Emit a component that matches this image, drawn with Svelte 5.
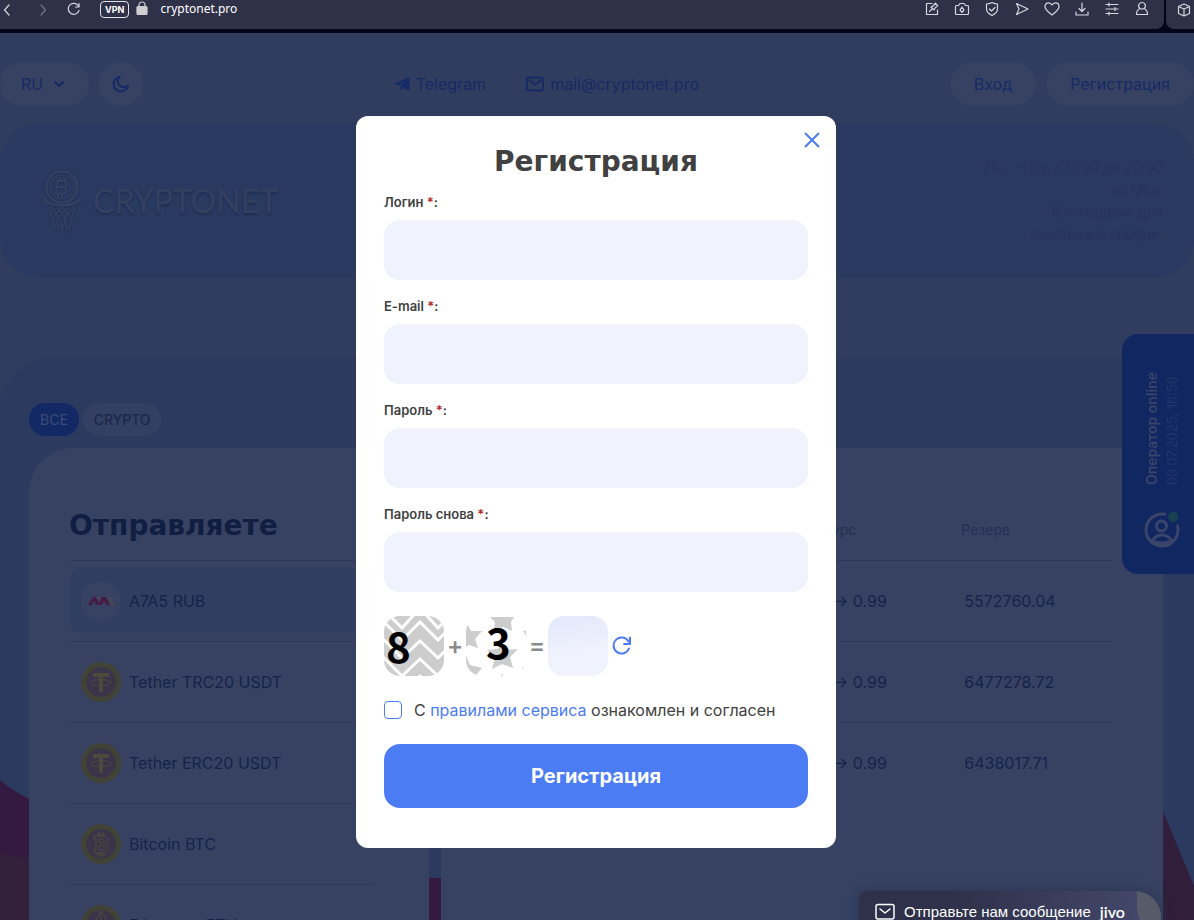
<script>
	const fields = [
		{ id: 'login', label: 'Логин', type: 'text' },
		{ id: 'email', label: 'E-mail', type: 'email' },
		{ id: 'password', label: 'Пароль', type: 'password' },
		{ id: 'password2', label: 'Пароль снова', type: 'password' }
	];

	const currencies = [
		{ name: 'A7A5 RUB', icon: 'a7a5' },
		{ name: 'Tether TRC20 USDT', icon: 'usdt' },
		{ name: 'Tether ERC20 USDT', icon: 'usdt' },
		{ name: 'Bitcoin BTC', icon: 'btc' },
		{ name: 'Ethereum ETH', icon: 'eth' }
	];

	const rates = [
		{ rate: '0.99', reserve: '5572760.04' },
		{ rate: '0.99', reserve: '6477278.72' },
		{ rate: '0.99', reserve: '6438017.71' }
	];

	const schedule = ['Пн. — Пт. с 11:00 до 20:00', 'по Мск.', 'В выходные дни', 'свободный график.'];

	// 16x16 outline icons of the browser toolbar
	const tools = [
		{ name: 'Edit', d: 'M8 2.5H2.5v11h11V9M13.5 12v1.5M5.5 10.5l2.5-2.5M7 6l3 3 1-2 2.8-2.4-2.4-2.4L9 5z' },
		{ name: 'Snapshot', d: 'M1.500 5.500q0-1 1-1H4.500l1.500-2h4l1.500 2h2q1 0 1 1v7q0 1-1 1h-11q-1 0-1-1zM8 6.200l2 2.800-2 2.400-2-2.400z' },
		{ name: 'Shield', d: 'M8 1.500c2 1 4 1.500 5.500 1.500v5c0 3-2.500 5-5.500 6.500C5 13 2.500 11 2.500 8V3C4 3 6 2.500 8 1.500zM5.500 8l2 2 3.500-3.500' },
		{ name: 'Flow', d: 'M2.500 2.500l11.500 5.500-11.500 5.500 2.500-5.500z' },
		{ name: 'Pinboard', d: 'M8 14C4 11 1 8.500 1 5.500 1 3 2.800 1.800 4.500 1.800 6 1.800 7.200 2.600 8 4c.8-1.400 2-2.200 3.500-2.200C13.200 1.800 15 3 15 5.500c0 3-3 5.500-7 8.500z' },
		{ name: 'Downloads', d: 'M8 2v8.500M5 7.500l3 3 3-3M2 11v3h12v-3' },
		{ name: 'Easy setup', d: 'M2 3.500h12M2 8h12M2 12.500h12M5 2v3M11 6.500v3M5 11v3' },
		{ name: 'Profile', d: 'M8 1.500a3.300 3.300 0 0 1 2 6c2.500 1 3.500 3 3.500 6h-11c0-3 1-5 3.500-6a3.300 3.300 0 0 1 2-6zM6 7.500q2 1 4 0' }
	];

	let lang = $state('RU');
	let agreed = $state(false);
	let open = $state(true);
</script>

<div class="screen">
	<div class="browser">
		<div class="toolbar">
			<div class="history">
				<button class="tool" aria-label="Back"><svg viewBox="0 0 16 16"><path d="M9 4L4.500 9 9 14" /></svg></button>
				<button class="tool dim" aria-label="Forward"><svg viewBox="0 0 16 16"><path d="M8 4l4.500 5L8 14" /></svg></button>
				<button class="tool" aria-label="Reload">
					<svg viewBox="0 0 16 16"><path d="M12.500 5A5.500 5.500 0 1 0 13 9.500M13 2.500v3.500H9.500" /></svg>
				</button>
			</div>
			<span class="vpn">VPN</span>
			<svg class="lock" viewBox="0 0 12 14"><path d="M3 6V4a3 3 0 0 1 6 0v2" /><rect x="1" y="5.500" width="10" height="8" rx="1" /></svg>
			<span class="url">cryptonet.pro</span>
			<div class="tools">
				{#each tools as tool}
					<button class="tool" aria-label={tool.name}><svg viewBox="0 0 16 16"><path d={tool.d} /></svg></button>
				{/each}
			</div>
		</div>
		<div class="side">
			<button class="tool" aria-label="Extensions">
				<svg viewBox="0 0 16 16"><path d="M8 2l5.500 2.500v7L8 14l-5.500-2.500v-7zM2.500 4.500L8 7l5.500-2.500M8 7v7" /></svg>
			</button>
		</div>
	</div>

	<div class="site">
		<header>
			<div class="group">
				<label class="pill lang">
					<select bind:value={lang} aria-label="Язык">
						<option>RU</option>
						<option>EN</option>
					</select>
					<svg viewBox="0 0 12 8"><path d="M2 2l4 4 4-4" /></svg>
				</label>
				<button class="pill theme" aria-label="Тема">
					<svg viewBox="0 0 20 20"><path d="M8.500 3A7.300 7.300 0 1 0 17 11.500 5.500 5.500 0 0 1 8.500 3z" /></svg>
				</button>
			</div>
			<div class="contacts">
				<a href="#telegram">
					<svg class="plane" viewBox="0 0 16 14"><path d="M0 6.800L15.500 0v14L9.500 11l-2.500 2-.5-4L13 3.500 5 8.500z" /></svg>
					Telegram
				</a>
				<a href="#mail">
					<svg class="mail" viewBox="0 0 18 16"><rect x="1" y="1.500" width="16" height="13" rx="1.500" /><path d="M3.500 4.500l5.500 4 5.500-4" /></svg>
					mail@cryptonet.pro
				</a>
			</div>
			<div class="group">
				<a class="pill" href="#login">Вход</a>
				<a class="pill" href="#register">Регистрация</a>
			</div>
		</header>

		<div class="banner">
			<a class="logo" href="#home">
				<svg viewBox="0 0 38 62">
					<circle cx="19" cy="17" r="15.500" stroke-width="2.500" />
					<circle cx="19" cy="17" r="12" stroke-width="1.200" />
					<path d="M27 5a15 15 0 0 1 2 23M1 28c2 9 34 9 36 0M2 31c6 6 28 6 34 0" stroke-width="2" />
					<path d="M15 11l-2 13M14 11h6c5 0 5 6 0 6h-5 5c5 1 4 7-1 7h-7M17 8v3M21 8v3M15 24v3M19 24v3" stroke-width="2" />
					<path d="M6 37l6 22M32 37l-6 22M8 37l9 12 3 11M14 38l10 11-6 11M24 38L13 50l3 10M30 37l-9 12 3 11M19 37l-8 9M19 37l8 9" stroke-width="1.500" />
				</svg>
				<span>CRYPTONET</span>
			</a>
			<p>
				{#each schedule as line}
					<span>{line}</span>
				{/each}
			</p>
		</div>

		<main>
			<svg class="waves" viewBox="0 0 1194 140" preserveAspectRatio="xMidYMax slice">
				<path fill="#341a40" d="M0 0C14 12 22 15 40 24L240 98h300v42H0z" />
				<path fill="#33203a" d="M0 74Q20 78 40 80v60H0z" />
				<path fill="#301e3a" d="M1150 0l44 106v34h-60V0z" />
			</svg>
			<div class="tabs">
				<button class="tab active">ВСЕ</button>
				<button class="tab">CRYPTO</button>
			</div>
			<div class="panels">
				<section class="panel give">
					<h2>Отправляете</h2>
					<ul>
						{#each currencies as currency, i}
							<li>
								<button class="currency" class:selected={i === 0}>
									<svg viewBox="0 0 40 40">
										{#if currency.icon === 'a7a5'}
											<circle cx="20" cy="20" r="20" fill="#374263" />
											<path fill="#451c45" d="M7 24l5-8h3l4 8h-4l-2-4-2 4zM17 24l4-8h4l4 8h-4l-2-4-2 4z" />
											<path fill="#4a4855" d="M15 16h5l-2 4zM26 16h6v2h-3l4 3v3h-3l-2-5z" />
										{:else}
											<circle cx="20" cy="20" r="20" fill="#414336" />
											<circle cx="20" cy="20" r="15" fill="#3b3349" />
											<circle cx="20" cy="20" r="15" fill="none" stroke="#3c3c3b" />
											{#if currency.icon === 'usdt'}
												<path fill="#4a4b3d" d="M12 11h16v4h-6v15h-4V15h-6z" />
												<ellipse cx="20" cy="20.500" rx="10" ry="3" fill="none" stroke="#4a4b3d" />
											{:else if currency.icon === 'btc'}
												<path class="line" d="M13 12h9c6 0 6 7 2 8 5 1 4 9-2 9h-9v-3h2V15h-2zM18 15v4h3c3 0 3-4 0-4zM18 22v4h4c3 0 3-4 0-4zM17 12V9h2v3M21 12V9h2v3M17 29v3h2v-3M21 29v3h2v-3" />
											{:else}
												<path class="line" d="M20 6l-8 14 8 5 8-5zM20 6v19M12 23l8 10 8-10" />
											{/if}
										{/if}
									</svg>
									{currency.name}
								</button>
							</li>
						{/each}
					</ul>
				</section>
				<section class="panel get">
					<table>
						<thead>
							<tr><th class="rate">Курс</th><th>Резерв</th></tr>
						</thead>
						<tbody>
							{#each rates as row}
								<tr><td class="rate">→ {row.rate}</td><td class="reserve">{row.reserve}</td></tr>
							{/each}
						</tbody>
					</table>
				</section>
			</div>
		</main>
	</div>

	<aside class="operator">
		<div class="status">
			<b>Оператор online</b>
			<span>09.07.2025, 16:56</span>
		</div>
		<svg viewBox="0 0 36 36">
			<path d="M21 2.300A16 16 0 1 0 33.500 14M8 29c5-8 15-8 20 0M8 29q10 4 20 0" />
			<circle cx="17.500" cy="14" r="5" />
			<circle class="dot" cx="29" cy="5" r="5" />
		</svg>
	</aside>

	<button class="jivo">
		<svg viewBox="0 0 20 18"><rect x="1" y="1.500" width="18" height="14.500" rx="2" /><path d="M5 6l5 4 5-4" /></svg>
		Отправьте нам сообщение
		<span>jivo</span>
		<i></i>
	</button>

	{#if open}
		<div class="overlay">
			<form class="modal" onsubmit={(e) => e.preventDefault()}>
				<button type="button" class="close" aria-label="Закрыть" onclick={() => (open = false)}>
					<svg viewBox="0 0 16 16"><path d="M1.500 1.500l13 13M14.500 1.500l-13 13" /></svg>
				</button>
				<h1>Регистрация</h1>
				{#each fields as field}
					<div class="field">
						<label for={field.id}>{field.label} <em>*</em>:</label>
						<input id={field.id} type={field.type} />
					</div>
				{/each}
				<div class="captcha">
					<svg class="image" viewBox="0 0 60 60">
						<clipPath id="tile"><rect width="60" height="60" rx="16" /></clipPath>
						<g clip-path="url(#tile)">
							<rect width="60" height="60" fill="#cdcdcd" />
							<path class="zigzag" d="M-4 -10L18 12 36 -8 54 12 66 0M-4 2L18 24 36 6 54 24 66 12M-4 20L18 42 36 25 54 42 66 30M-4 38L18 60 36 43 54 60 66 48M18 78L36 60 54 78" />
						</g>
						<text x="2" y="47">8</text>
					</svg>
					<span>+</span>
					<svg class="image" viewBox="0 0 60 60">
						<g clip-path="url(#tile)">
							<path
								fill="#cdcdcd"
								d="M24 1h24l-3 5 1 9-9-4-9 4 1-9zM-4 8l5 0 4 7 11 0-7 8 3 9-9-3-7 4zM36 27l4 7 12-1-8 8 3 11-11-4-10 5 3-11-8-8 11-1zM0 40l4 9 12 3-7 8H0zM57 14l3 1v5zM56 52l2-1-1 2zM36 57l1 3h-2z"
							/>
						</g>
						<text x="20" y="43">3</text>
					</svg>
					<span>=</span>
					<input type="text" aria-label="Ответ" />
					<button type="button" class="refresh" aria-label="Обновить">
						<svg viewBox="0 0 20 20"><path d="M16.500 5.500A8 8 0 1 0 17 12.500M18 1.500V8h-6" /></svg>
					</button>
				</div>
				<div class="agree">
					<input id="agree" type="checkbox" bind:checked={agreed} />
					<label for="agree">С <a href="#rules">правилами сервиса</a> ознакомлен и согласен</label>
				</div>
				<button class="submit">Регистрация</button>
			</form>
		</div>
	{/if}
</div>

<style>
	:global(body) {
		margin: 0;
	}

	.screen {
		position: relative;
		height: 100vh;
		overflow: hidden;
		background: #303d5f;
		font: 16px/20px Inter, 'Noto Sans', sans-serif;
		color: #15224a;
	}

	.screen *,
	.screen *::before {
		box-sizing: border-box;
	}

	button,
	input,
	select {
		font: inherit;
		color: inherit;
		border: none;
		background: none;
		padding: 0;
		margin: 0;
	}

	button {
		cursor: pointer;
	}

	a {
		color: inherit;
		text-decoration: none;
	}

	svg {
		flex: none;
		fill: none;
		stroke-linecap: round;
		stroke-linejoin: round;
	}

	h1,
	h2 {
		margin: 0;
		font: bold 28px/28px 'DejaVu Sans', sans-serif;
	}

	/* browser chrome */
	.browser {
		display: flex;
		gap: 2px;
		height: 33px;
		padding-bottom: 4px;
		background: #03051a;
	}

	.toolbar {
		flex: 1;
		display: flex;
		align-items: flex-start;
		padding-right: 14px;
		background: #2f3148;
		border-radius: 0 0 8px 0;
	}

	.history {
		display: flex;
		gap: 17px;
	}

	.tool {
		width: 16px;
		height: 18px;
	}

	.tool svg {
		display: block;
		width: 16px;
		height: 16px;
		stroke: #d6d7de;
		stroke-width: 1.2;
	}

	.dim {
		opacity: 0.4;
	}

	.vpn {
		margin: 1px 7px 0 18px;
		padding: 0 4px;
		border: 1px solid #e4e4e8;
		border-radius: 4px;
		color: #fff;
		font-size: 9px;
		line-height: 15px;
		font-weight: 700;
	}

	.lock {
		width: 12px;
		height: 14px;
		margin: 1px 12px 0 0;
		stroke: #cfcfd2;
		stroke-width: 1.2;
	}

	.lock rect {
		fill: #cfcfd2;
	}

	.url {
		color: #fff;
		font-family: 'Noto Sans', sans-serif;
		font-size: 12px;
		line-height: 18px;
	}

	.tools {
		display: flex;
		gap: 14px;
		margin-left: auto;
	}

	.side {
		width: 28px;
		padding: 1px 0 0 10px;
		background: #2f3148;
		border-radius: 0 0 0 8px;
	}

	/* page */
	header {
		display: flex;
		justify-content: space-between;
		align-items: center;
		padding: 29px 0 17px;
		color: #152a66;
	}

	.group,
	.contacts {
		display: flex;
		gap: 10px;
	}

	.contacts {
		gap: 40px;
	}

	.contacts a {
		display: flex;
		align-items: center;
		gap: 6px;
	}

	.pill {
		display: flex;
		align-items: center;
		height: 44px;
		padding: 0 24px;
		border-radius: 22px;
		background: #374263;
	}

	.lang {
		gap: 9px;
		padding-left: 21px;
	}

	.lang select {
		appearance: none;
	}

	.lang svg {
		width: 12px;
		height: 8px;
		stroke: #152a66;
		stroke-width: 2;
	}

	.theme {
		width: 44px;
		padding: 0 12px;
	}

	.theme svg {
		width: 20px;
		height: 20px;
		stroke: #152a66;
		stroke-width: 2;
	}

	.plane {
		width: 16px;
		height: 14px;
		fill: #152a66;
	}

	.mail {
		width: 18px;
		height: 16px;
		stroke: #152a66;
		stroke-width: 2;
	}

	.banner {
		display: flex;
		justify-content: space-between;
		align-items: center;
		min-height: 155px;
		padding: 0 31px 0 43px;
		border-radius: 40px;
		background: #2a3960;
	}

	.logo {
		display: flex;
		align-items: center;
		gap: 12px;
		color: #34405f;
		font: 32px/40px Lato, sans-serif;
		text-shadow: 0 2px 2px #1f2e55;
	}

	.logo svg {
		width: 38px;
		height: 62px;
		stroke: #34405f;
		filter: drop-shadow(0 1px 1px #1f2e55);
	}

	.banner p {
		margin: 0;
		text-align: right;
		font-size: 14px;
		line-height: 22px;
		color: #26335f;
	}

	.banner p span {
		display: block;
	}

	main {
		position: relative;
		height: 600px;
		margin-top: 80px;
		padding: 45px 31px 0 29px;
		border-radius: 50px 50px 0 0;
		background: #2d3a5f;
	}

	.waves {
		position: absolute;
		left: 0;
		top: 422px;
		width: 100%;
		height: 140px;
	}

	.tabs {
		position: relative;
		display: flex;
		gap: 4px;
		margin-bottom: 12px;
	}

	.tab {
		height: 33px;
		padding: 0 11px;
		border-radius: 16px;
		background: #334061;
		color: #17234a;
		font-size: 14px;
	}

	.tab.active {
		background: #132966;
		color: #3e4b74;
	}

	.panels {
		position: relative;
		display: grid;
		grid-template-columns: 400fr 722fr;
		gap: 12px;
	}

	.panel {
		height: 600px;
		background: #374263;
	}

	.give {
		padding: 64px 56px 0 40px;
		border-top-left-radius: 44px;
	}

	.get {
		padding: 52px 50px 0 40px;
	}

	h2 {
		margin-bottom: 20px;
		color: #101e42;
	}

	ul {
		list-style: none;
		margin: 0;
		padding: 0;
	}

	li {
		padding: 8px 0;
		border-top: 1px solid #2b3859;
	}

	.currency {
		display: flex;
		align-items: center;
		gap: 8px;
		width: 100%;
		height: 64px;
		padding: 0 12px;
		border-radius: 14px;
	}

	.selected {
		background: #303e62;
	}

	.currency svg {
		width: 40px;
		height: 40px;
	}

	.line {
		stroke: #4d4e3e;
	}

	table {
		width: 100%;
		border-collapse: collapse;
		table-layout: fixed;
	}

	th,
	td {
		padding: 0;
		text-align: left;
	}

	th {
		height: 60px;
		color: #222f52;
		font-size: 14px;
		font-weight: 400;
	}

	td {
		height: 81px;
	}

	.rate {
		width: 76%;
	}

	th.rate {
		padding-left: 342px;
	}

	td.rate {
		padding-left: 352px;
	}

	.reserve {
		padding-left: 3px;
	}

	tbody tr {
		border-top: 1px solid #2b3859;
	}

	.operator {
		position: absolute;
		right: 0;
		top: 334px;
		display: flex;
		flex-direction: column;
		align-items: center;
		justify-content: flex-end;
		gap: 14px;
		width: 72px;
		height: 240px;
		padding: 0 0 26px 8px;
		border-radius: 16px 0 0 16px;
		background: #112762;
		color: #3a4569;
		font-size: 14px;
	}

	.status {
		writing-mode: vertical-rl;
		transform: rotate(180deg);
		padding-top: 12px;
		border-top: 1px solid #18295b;
		white-space: nowrap;
	}

	/* each line is a vertical column, read bottom to top */
	.status b,
	.status span {
		display: block;
	}

	.status b {
		font-weight: 600;
	}

	.status span {
		color: #24376b;
		font-size: 13px;
	}

	.operator svg {
		width: 36px;
		height: 36px;
		stroke: #3a4569;
		stroke-width: 3;
	}

	.operator .dot {
		fill: #174350;
		stroke: none;
	}

	.jivo {
		position: absolute;
		right: 33px;
		bottom: -12px;
		display: flex;
		align-items: center;
		height: 41px;
		padding: 0 36px 0 16px;
		gap: 9px;
		overflow: hidden;
		border-radius: 8px 26px 0 0;
		background: linear-gradient(100deg, #2f3049 30%, #454a6e);
		box-shadow: 0 0 12px #2a3450;
		color: #fff;
		font: 15px/20px 'Liberation Sans', sans-serif;
	}

	.jivo svg {
		width: 20px;
		height: 18px;
		stroke: #fff;
		stroke-width: 1.5;
	}

	.jivo span {
		font: 600 16px/20px Lato, sans-serif;
	}

	.jivo i {
		position: absolute;
		right: 0;
		top: 0;
		width: 24px;
		height: 41px;
		border-radius: 0 24px 0 24px;
		background: #575a68;
	}

	/* dialog */
	.overlay {
		position: absolute;
		inset: 0;
		display: flex;
		justify-content: center;
		align-items: flex-start;
		padding: 116px 2px 0 0;
	}

	.modal {
		position: relative;
		width: 480px;
		padding: 32px 28px 40px;
		border-radius: 12px;
		background: #fff;
		color: #414141;
	}

	.close {
		position: absolute;
		top: 16px;
		right: 16px;
		width: 16px;
		height: 16px;
	}

	.close svg {
		display: block;
		stroke: #4c7cf3;
		stroke-width: 2;
	}

	h1 {
		margin-bottom: 16px;
		text-align: center;
	}

	.field {
		display: flex;
		flex-direction: column;
		gap: 8px;
		margin-bottom: 16px;
		font-size: 13px;
		font-weight: 600;
	}

	em {
		color: #b3261e;
		font-style: normal;
	}

	.field input {
		height: 60px;
		padding: 0 20px;
		border-radius: 16px;
		background: #f0f3fd;
	}

	.captcha {
		display: flex;
		align-items: center;
		margin: 24px 0;
	}

	.image {
		width: 60px;
		height: 60px;
		overflow: visible;
	}

	.image text {
		fill: #000;
		font: 700 42px 'Noto Sans CJK SC', sans-serif;
	}

	.zigzag {
		stroke: #fff;
		stroke-width: 3;
		stroke-linejoin: miter;
	}

	.captcha span {
		width: 22px;
		text-align: center;
		color: #8a8a8a;
		font-size: 24px;
		font-weight: 600;
	}

	.captcha input {
		width: 60px;
		height: 60px;
		border-radius: 16px;
		background: linear-gradient(170deg, #e2e7fb, #f0f3fd 60%);
		text-align: center;
	}

	.refresh {
		width: 20px;
		height: 20px;
		margin-left: 4px;
	}

	.refresh svg {
		display: block;
		stroke: #4c7cf3;
		stroke-width: 2;
	}

	.agree {
		display: flex;
		align-items: center;
		gap: 12px;
		margin-bottom: 24px;
	}

	.agree input {
		appearance: none;
		width: 18px;
		height: 18px;
		border: 1px solid #4c7cf3;
		border-radius: 4px;
	}

	.agree input:checked {
		background: #4c7cf3;
	}

	.agree a {
		color: #4c7cf3;
	}

	.submit {
		width: 100%;
		height: 64px;
		border-radius: 16px;
		background: #4c7cf3;
		color: #fff;
		font-size: 20px;
		font-weight: 700;
	}
</style>
